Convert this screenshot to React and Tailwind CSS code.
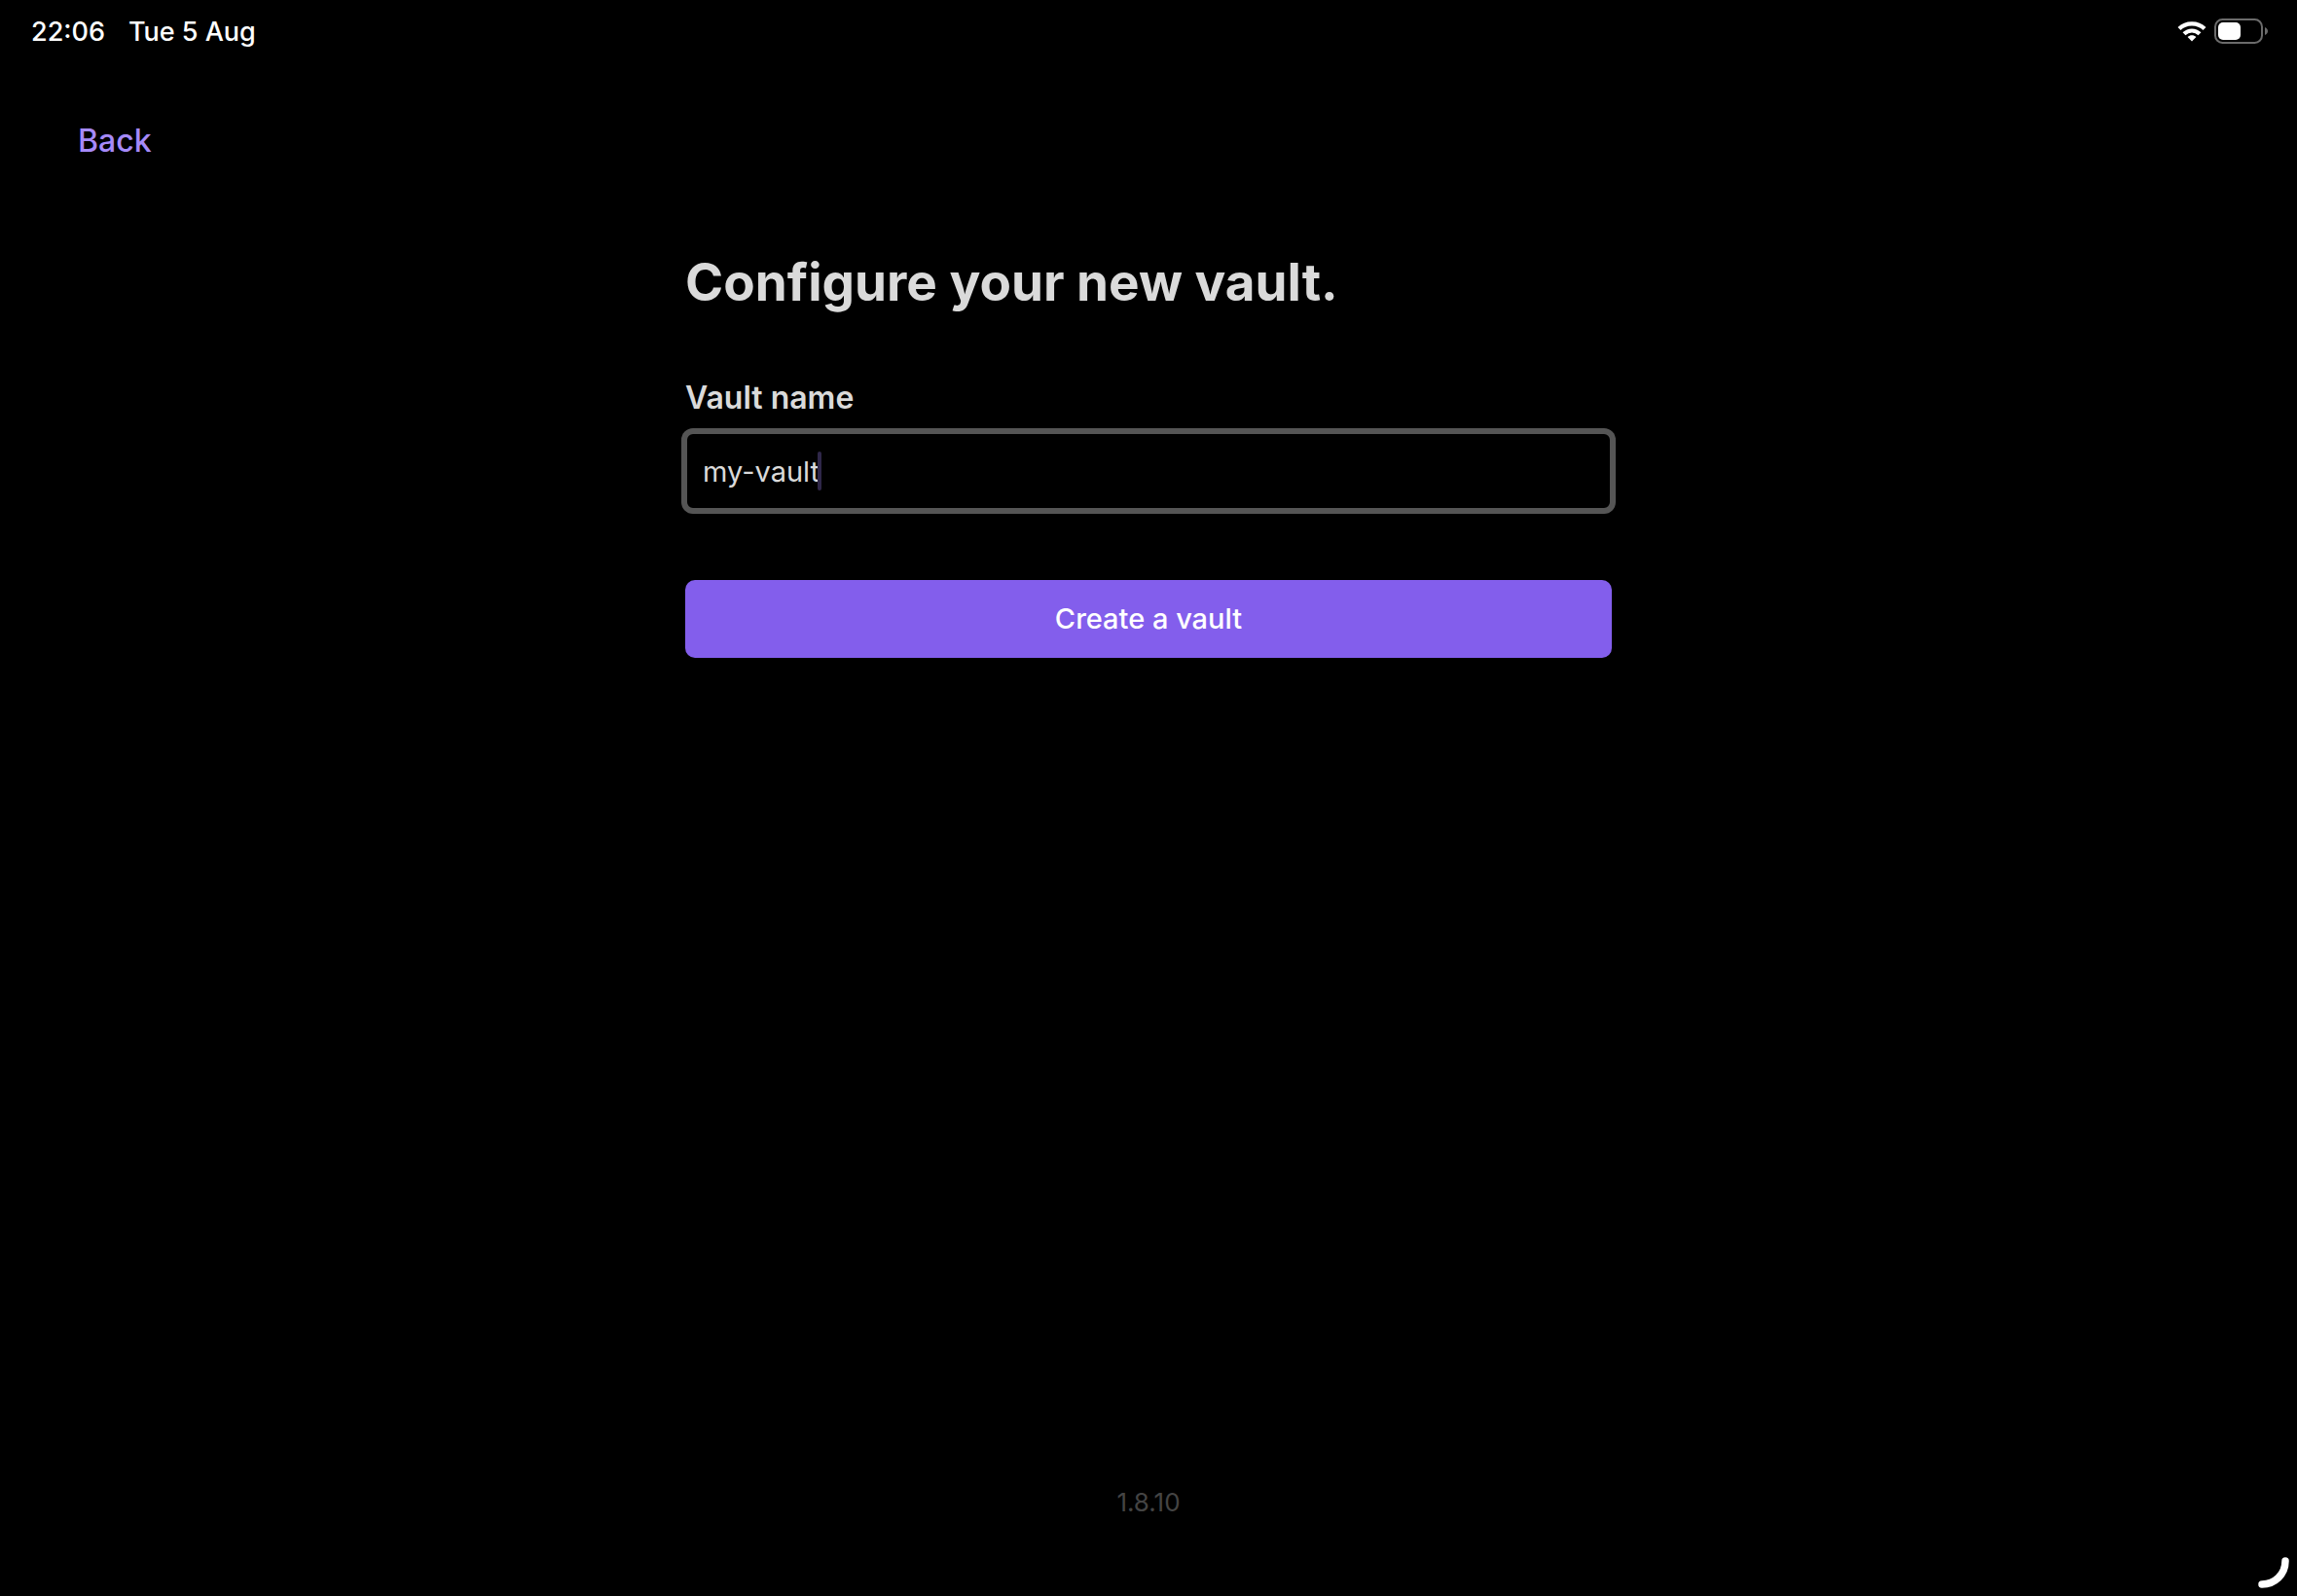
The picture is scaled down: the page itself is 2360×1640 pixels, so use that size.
import React from 'react';

function WifiIcon() {
  return (
    <svg width="30" height="22" viewBox="0 0 30 22" fill="none" aria-label="Wi-Fi">
      <path d="M2 8.6C9 1.6 21 1.6 28 8.6" stroke="white" strokeWidth="4.2" />
      <path d="M7 13.8C11.6 9.4 18.4 9.4 23 13.8" stroke="white" strokeWidth="4.2" />
      <path d="M15 21.4L10.6 16.9C13.2 14.7 16.8 14.7 19.4 16.9Z" fill="white" />
    </svg>
  );
}

function BatteryIcon() {
  return (
    <svg width="56" height="26" viewBox="0 0 56 26" aria-label="Battery">
      <rect x="1" y="1" width="48" height="24" rx="7.5" fill="none" stroke="#6b6b6b" strokeWidth="2" />
      <rect x="4" y="4" width="23" height="18" rx="5" fill="white" />
      <path d="M52 9C54 9.8 55 11.3 55 13C55 14.7 54 16.2 52 17Z" fill="#6b6b6b" />
    </svg>
  );
}

function StatusBar() {
  return (
    <header className="flex h-16 items-center justify-between pr-[29px] pl-8 text-[27px] leading-8 font-medium text-white">
      <div className="flex gap-6 pt-0.5">
        <span>22:06</span>
        <span>Tue 5 Aug</span>
      </div>
      <div className="flex items-center gap-2">
        <WifiIcon />
        <BatteryIcon />
      </div>
    </header>
  );
}

export default function App() {
  return (
    <div className="flex min-h-screen flex-col bg-black font-['Inter',sans-serif] text-[#dadada]">
      <StatusBar />
      <nav className="flex h-40 items-start px-20 pt-[61px]">
        <button type="button" className="text-[32px] leading-10 font-medium text-[#a68af9]">
          Back
        </button>
      </nav>
      <main className="mx-auto w-full max-w-[952px] grow">
        <h1 className="pt-8 text-[53px] leading-[68px] font-bold">Configure your new vault.</h1>
        <form className="pt-[65px]" onSubmit={(e) => e.preventDefault()}>
          <label htmlFor="vault-name" className="block text-[32px] leading-10 font-semibold">
            Vault name
          </label>
          <div className="relative mt-[15px]">
            <input
              id="vault-name"
              type="text"
              defaultValue="my-vault"
              className="block h-20 w-full rounded-[8px] border-2 border-[#555555] bg-black px-4 text-[29px] leading-10 ring-4 ring-[#555555] outline-none"
            />
            <span className="absolute top-5 left-[136px] h-10 w-1 rounded-sm bg-[#2f2749]" />
          </div>
          <button
            type="submit"
            className="mt-[72px] block h-20 w-full rounded-[10px] bg-[#835eec] text-[29px] leading-10 font-medium text-white"
          >
            Create a vault
          </button>
        </form>
      </main>
      <footer className="relative flex h-32 items-start justify-center pt-4 text-[26px] leading-8 text-[#444444]">
        1.8.10
        <svg className="absolute right-0 bottom-0" width="70" height="70" viewBox="0 0 70 70" fill="none" aria-hidden="true">
          <path d="M58 34C58 48 47 58 34 58" stroke="white" strokeWidth="7.5" strokeLinecap="round" />
        </svg>
      </footer>
    </div>
  );
}
